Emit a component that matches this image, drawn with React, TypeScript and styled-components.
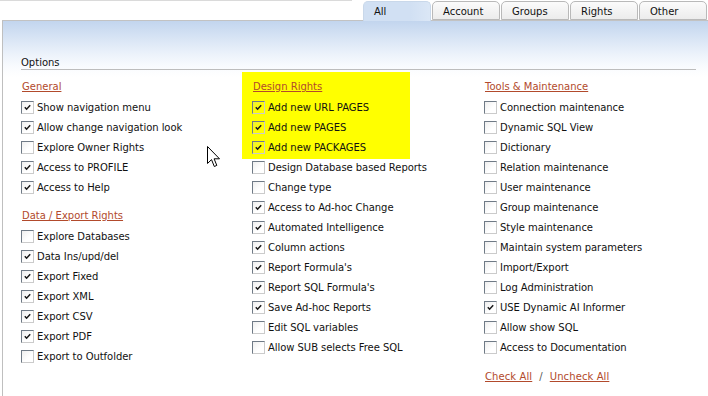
import React, { useState } from 'react';
import styled, { createGlobalStyle } from 'styled-components';

const GlobalStyle = createGlobalStyle`
  html, body {
    margin: 0;
    padding: 0;
    background: #ffffff;
  }
  body {
    font-family: 'DejaVu Sans', Verdana, sans-serif;
    font-size: 10px;
    color: #111;
  }
`;

const Page = styled.div`
  width: 708px;
  height: 396px;
  overflow: hidden;
`;

const TabRow = styled.div`
  display: flex;
  align-items: flex-end;
  height: 20px;
  padding-right: 1px;
`;

const TopRule = styled.div`
  align-self: flex-start;
  width: 352px;
  border-top: 1px solid #dadada;
`;

const Tabs = styled.div`
  display: flex;
  gap: 1px;
  margin-left: auto;
`;

const Tab = styled.div<{ $active?: boolean }>`
  box-sizing: border-box;
  width: 68px;
  height: ${(p) => (p.$active ? '20px' : '19px')};
  margin-bottom: ${(p) => (p.$active ? '-1px' : '0')};
  padding: 3px 0 0 10px;
  border: 1px solid ${(p) => (p.$active ? '#c9d8ea' : '#b9b9b9')};
  border-bottom: ${(p) => (p.$active ? 'none' : '1px solid #b9b9b9')};
  border-radius: 5px 5px 0 0;
  background: ${(p) =>
    p.$active
      ? 'linear-gradient(to right, #d1e0f3 0, #d1e0f3 70%, #dbe7f6 100%)'
      : 'linear-gradient(to bottom, #fbfbfb 0, #ececec 100%)'};
  color: #111;
  line-height: 13px;
  position: relative;
  z-index: 1;
  cursor: default;
`;

const Panel = styled.div`
  position: relative;
  margin-left: 2px;
  height: 376px;
  border-left: 1px solid #bfbfbf;
  border-top: 1px solid #c2c2c2;
  background: linear-gradient(
    to bottom,
    #c2d5ee 0,
    #d9e5f5 18px,
    #edf3fb 34px,
    #f9fbfe 46px,
    #ffffff 56px
  );
  padding: 36px 12px 0 18px;
  box-sizing: border-box;
`;

const Title = styled.div`
  line-height: 12px;
  border-bottom: 1px solid #bdbdbd;
`;

const Columns = styled.div`
  display: grid;
  grid-template-columns: 231px 232px 1fr;
  margin-top: 7px;
`;

const Column = styled.div`
  display: flex;
  flex-direction: column;
`;

const Group = styled.div<{ $highlight?: boolean; $spaced?: boolean }>`
  display: flex;
  flex-direction: column;
  margin-top: ${(p) => (p.$spaced ? '9px' : '0')};
  ${(p) =>
    p.$highlight &&
    `
    background: #ffff00;
    width: 168px;
    box-sizing: border-box;
    margin: -5px 0 -2px -10px;
    padding: 5px 0 2px 10px;
  `}
`;

const Heading = styled.a`
  height: 20px;
  line-height: 20px;
  color: #b24a2c;
  text-decoration: underline;
  align-self: flex-start;
  padding-left: 1px;
`;

const Row = styled.label`
  display: flex;
  align-items: center;
  height: 20px;
  white-space: nowrap;
  letter-spacing: -0.05px;
  cursor: default;
`;

const Box = styled.span`
  box-sizing: border-box;
  display: inline-flex;
  width: 13px;
  height: 13px;
  margin-right: 3px;
  border-top: 1px solid #6f7a86;
  border-left: 1px solid #6f7a86;
  border-right: 1px solid #cbcbcb;
  border-bottom: 1px solid #cbcbcb;
  background: linear-gradient(135deg, rgba(200, 200, 200, 0.3) 0, rgba(255, 255, 255, 0) 60%);
  align-items: center;
  justify-content: center;
`;

const Footer = styled.div`
  display: flex;
  align-items: center;
  height: 20px;
  margin-top: 9px;
  gap: 7px;
  padding-left: 1px;
  letter-spacing: 0.1px;
`;

const Link = styled.a`
  color: #b24a2c;
  text-decoration: underline;
  cursor: pointer;
`;

const Slash = styled.span`
  color: #555;
`;

const Pointer = styled.svg`
  position: absolute;
  left: 204px;
  top: 125px;
  pointer-events: none;
`;

type Item = [string, boolean];
type Section = { title: string; items: Item[]; highlight?: boolean };

const columns: Section[][] = [
  [
    {
      title: 'General',
      items: [
        ['Show navigation menu', true],
        ['Allow change navigation look', true],
        ['Explore Owner Rights', false],
        ['Access to PROFILE', true],
        ['Access to Help', true],
      ],
    },
    {
      title: 'Data / Export Rights',
      items: [
        ['Explore Databases', false],
        ['Data Ins/upd/del', true],
        ['Export Fixed', true],
        ['Export XML', true],
        ['Export CSV', true],
        ['Export PDF', true],
        ['Export to Outfolder', false],
      ],
    },
  ],
  [
    {
      title: 'Design Rights',
      highlight: true,
      items: [
        ['Add new URL PAGES', true],
        ['Add new PAGES', true],
        ['Add new PACKAGES', true],
      ],
    },
    {
      title: '',
      items: [
        ['Design Database based Reports', false],
        ['Change type', false],
        ['Access to Ad-hoc Change', true],
        ['Automated Intelligence', true],
        ['Column actions', true],
        ["Report Formula's", true],
        ["Report SQL Formula's", true],
        ['Save Ad-hoc Reports', true],
        ['Edit SQL variables', false],
        ['Allow SUB selects Free SQL', false],
      ],
    },
  ],
  [
    {
      title: 'Tools & Maintenance',
      items: [
        ['Connection maintenance', false],
        ['Dynamic SQL View', false],
        ['Dictionary', false],
        ['Relation maintenance', false],
        ['User maintenance', false],
        ['Group maintenance', false],
        ['Style maintenance', false],
        ['Maintain system parameters', false],
        ['Import/Export', false],
        ['Log Administration', false],
        ['USE Dynamic AI Informer', true],
        ['Allow show SQL', false],
        ['Access to Documentation', false],
      ],
    },
  ],
];

const tabs = ['All', 'Account', 'Groups', 'Rights', 'Other'];

const Check: React.FC<{ checked: boolean; onToggle: () => void }> = ({ checked, onToggle }) => (
  <Box onClick={onToggle}>
    {checked && (
      <svg width="9" height="9" viewBox="0 0 9 9">
        <path d="M1.8 4.2 L3.6 6.2 L7.2 2.2" fill="none" stroke="#1a1a1a" strokeWidth="1.5" />
      </svg>
    )}
  </Box>
);

const App: React.FC = () => {
  const [state, setState] = useState<Record<string, boolean>>(() => {
    const s: Record<string, boolean> = {};
    columns.flat().forEach((sec) => sec.items.forEach(([label, on]) => (s[label] = on)));
    return s;
  });

  const toggle = (label: string) => setState((prev) => ({ ...prev, [label]: !prev[label] }));

  const setAll = (value: boolean) =>
    setState((prev) => {
      const next: Record<string, boolean> = {};
      Object.keys(prev).forEach((k) => (next[k] = value));
      return next;
    });

  return (
    <Page>
      <GlobalStyle />
      <TabRow>
        <TopRule />
        <Tabs>
          {tabs.map((t) => (
            <Tab key={t} $active={t === 'All'}>
              {t}
            </Tab>
          ))}
        </Tabs>
      </TabRow>
      <Panel>
        <Title>Options</Title>
        <Columns>
          {columns.map((col, ci) => (
            <Column key={ci}>
              {col.map((sec, si) => (
                <Group key={si} $highlight={sec.highlight} $spaced={si > 0 && !!sec.title}>
                  {sec.title && <Heading>{sec.title}</Heading>}
                  {sec.items.map(([label]) => (
                    <Row key={label}>
                      <Check checked={state[label]} onToggle={() => toggle(label)} />
                      {label}
                    </Row>
                  ))}
                </Group>
              ))}
              {ci === 2 && (
                <Footer>
                  <Link onClick={() => setAll(true)}>Check All</Link>
                  <Slash>/</Slash>
                  <Link onClick={() => setAll(false)}>Uncheck All</Link>
                </Footer>
              )}
            </Column>
          ))}
        </Columns>
        <Pointer width="14" height="23" viewBox="0 0 14 23">
          <path
            d="M0.5 0.5 L0.5 17.5 L4.5 13.6 L7.3 20.5 L9.8 19.4 L7.1 12.8 L12.5 12.8 Z"
            fill="#ffffff"
            stroke="#000000"
            strokeWidth="1"
            strokeLinejoin="miter"
          />
        </Pointer>
      </Panel>
    </Page>
  );
};

export default App;
